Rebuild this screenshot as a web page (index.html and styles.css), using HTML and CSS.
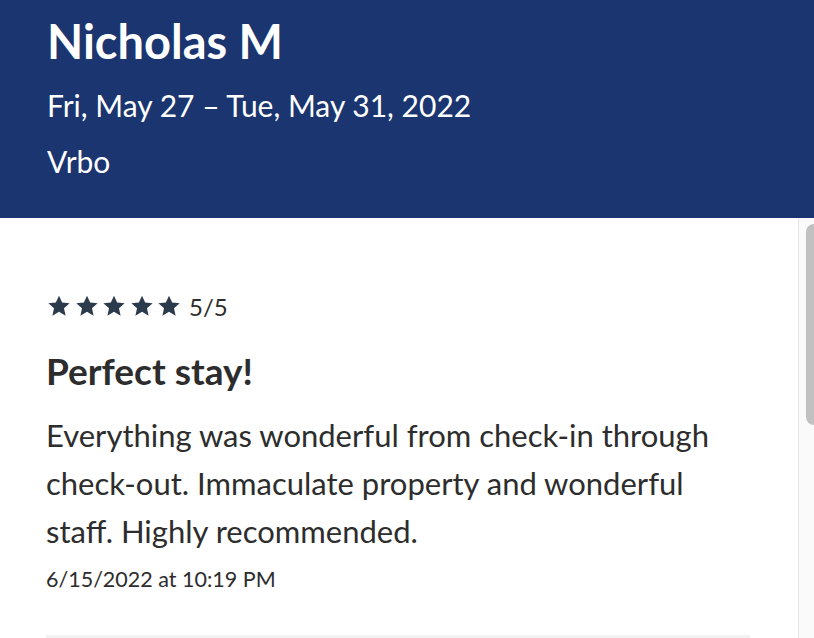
FILE: index.html
```html
<!DOCTYPE html>
<html lang="en">
<head>
  <meta charset="utf-8"/>
  <title>Review - Nicholas M</title>
  <link rel="stylesheet" href="styles.css">
</head>
<body>
  <div class="cabecera">
    <h1>Nicholas M</h1>
    <p class="fechas">Fri, May 27 – Tue, May 31, 2022</p>
    <p class="origen">Vrbo</p>
  </div>

  <div class="cuerpo">
    <div class="lista">
      <div class="resena">
        <div class="puntaje">
          <span class="estrellas">
            <svg viewBox="0 0 24 24"><path d="M12 2.5l2.9 6.3 6.9.7-5.2 4.6 1.5 6.8L12 17.4l-6.1 3.5 1.5-6.8-5.2-4.6 6.9-.7z"/></svg>
            <svg viewBox="0 0 24 24"><path d="M12 2.5l2.9 6.3 6.9.7-5.2 4.6 1.5 6.8L12 17.4l-6.1 3.5 1.5-6.8-5.2-4.6 6.9-.7z"/></svg>
            <svg viewBox="0 0 24 24"><path d="M12 2.5l2.9 6.3 6.9.7-5.2 4.6 1.5 6.8L12 17.4l-6.1 3.5 1.5-6.8-5.2-4.6 6.9-.7z"/></svg>
            <svg viewBox="0 0 24 24"><path d="M12 2.5l2.9 6.3 6.9.7-5.2 4.6 1.5 6.8L12 17.4l-6.1 3.5 1.5-6.8-5.2-4.6 6.9-.7z"/></svg>
            <svg viewBox="0 0 24 24"><path d="M12 2.5l2.9 6.3 6.9.7-5.2 4.6 1.5 6.8L12 17.4l-6.1 3.5 1.5-6.8-5.2-4.6 6.9-.7z"/></svg>
          </span>
          <span class="nota">5/5</span>
        </div>
        <h2>Perfect stay!</h2>
        <p class="texto">Everything was wonderful from check-in through check-out. Immaculate property and wonderful staff. Highly recommended.</p>
        <p class="hora">6/15/2022 at 10:19 PM</p>
      </div>
      <div class="resena siguiente"></div>
    </div>
    <div class="barra"><div class="pulgar"></div></div>
  </div>
</body>
</html>
```

FILE: styles.css
```css
html, body {
  margin: 0;
  height: 100%;
  overflow: hidden;
}
body {
  font-family: Lato, "Open Sans", sans-serif;
  background: #fff;
  color: #2d2d2d;
}
.cabecera {
  background: #1a356f;
  color: #fff;
  height: 218px;
  box-sizing: border-box;
  padding: 13px 47px 0;
}
.cabecera h1 {
  margin: 0;
  font-size: 47px;
  font-weight: 700;
  line-height: 56px;
}
.fechas {
  margin: 8px 0 0;
  font-size: 30px;
  line-height: 56px;
}
.origen {
  margin: 0;
  font-size: 30px;
  line-height: 56px;
}
.cuerpo {
  display: flex;
  height: 420px;
  overflow: hidden;
}
.lista {
  flex: 1;
}
.barra {
  width: 8px;
  border-left: 1px solid #e6e6e6;
  background: #fafafa;
  padding-top: 6px;
  padding-left: 7px;
}
.pulgar {
  height: 201px;
  background: #c1c1c1;
  border-radius: 8px 0 0 8px;
}
.resena {
  margin: 0 48px 0 46px;
  padding-top: 72px;
  padding-bottom: 41px;
}
.resena + .resena {
  border-top: 4px solid #f2f2f2;
  height: 420px;
  padding: 0;
}
.puntaje {
  display: flex;
  align-items: center;
  gap: 7px;
  height: 32px;
}
.estrellas {
  display: flex;
  gap: 1.5px;
}
.estrellas svg {
  width: 26px;
  height: 26px;
  fill: #2c3b4c;
}
.nota {
  font-size: 24px;
}
h2 {
  margin: 27px 0 0;
  font-size: 37px;
  font-weight: 700;
  line-height: 44px;
}
.texto {
  margin: 18px 0 0;
  max-width: 690px;
  font-size: 31px;
  line-height: 48px;
}
.hora {
  margin: 9px 0 0;
  font-size: 21.5px;
  line-height: 30px;
}
```
